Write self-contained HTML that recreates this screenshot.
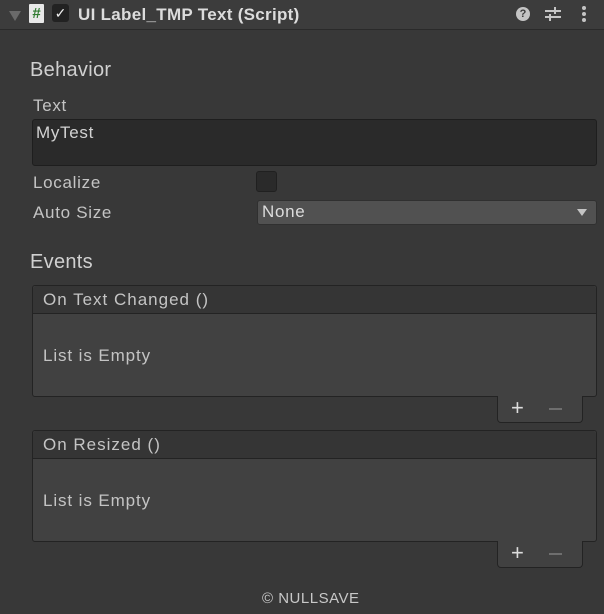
<!DOCTYPE html>
<html><head><style>
body{margin:0;width:604px;height:614px;background:#383838;font-family:"Liberation Sans",sans-serif;color:#c4c4c4;position:relative;overflow:hidden}
.a{position:absolute}
.hdr{left:0;top:0;width:604px;height:29px;background:#3c3c3c;border-bottom:1px solid #2a2a2a}
.t{font-size:17px;white-space:nowrap;letter-spacing:0.7px}
.box{border:1px solid #232323;border-radius:3px}
</style></head><body>
<div class="a hdr"></div>
<div class="a" style="left:9px;top:11px;width:0;height:0;border-left:6px solid transparent;border-right:6px solid transparent;border-top:10px solid #6a6a6a"></div>
<div class="a" style="left:29px;top:4px;width:15px;height:19px;background:#e8e8e8;border-radius:1px;color:#2f7a2f;font-size:15px;font-weight:bold;text-align:center;line-height:19px">#</div>
<div class="a" style="left:52px;top:4px;width:17px;height:18px;background:#222;border-radius:3px;color:#eee;font-size:14px;text-align:center;line-height:18px">✓</div>
<div class="a t" style="left:78px;top:5px;color:#dcdcdc;font-size:17px;font-weight:bold;letter-spacing:0.3px">UI Label_TMP Text (Script)</div>
<div class="a" style="left:516px;top:7px;width:14px;height:14px;border-radius:50%;background:#c4c4c4;color:#3c3c3c;font-size:11px;font-weight:bold;text-align:center;line-height:14px">?</div>
<svg class="a" style="left:544px;top:6px" width="18" height="16"><g stroke="#c4c4c4" stroke-width="2"><line x1="1" y1="5" x2="17" y2="5"/><line x1="1" y1="11" x2="17" y2="11"/><line x1="11" y1="1" x2="11" y2="8"/><line x1="6" y1="8" x2="6" y2="15"/></g></svg>
<div class="a" style="left:582px;top:6px;width:4px;height:4px;background:#c4c4c4;border-radius:2px;box-shadow:0 6px 0 #c4c4c4,0 12px 0 #c4c4c4"></div>

<div class="a t" style="left:30px;top:59px;font-size:20px;color:#d0d0d0;letter-spacing:0.3px">Behavior</div>
<div class="a t" style="left:33px;top:96px">Text</div>
<div class="a box" style="left:32px;top:119px;width:563px;height:45px;background:#2a2a2a;border-color:#1e1e1e"></div>
<div class="a t" style="left:36px;top:123px;color:#d2d2d2">MyTest</div>
<div class="a t" style="left:33px;top:173px">Localize</div>
<div class="a" style="left:256px;top:171px;width:19px;height:19px;background:#2a2a2a;border:1px solid #202020;border-radius:3px"></div>
<div class="a t" style="left:33px;top:203px">Auto Size</div>
<div class="a" style="left:257px;top:200px;width:338px;height:23px;background:#515151;border:1px solid #303030;border-radius:3px"></div>
<div class="a t" style="left:262px;top:202px;color:#dcdcdc">None</div>
<div class="a" style="left:577px;top:209px;border-left:5px solid transparent;border-right:5px solid transparent;border-top:7px solid #c4c4c4"></div>

<div class="a t" style="left:30px;top:251px;font-size:20px;color:#d0d0d0;letter-spacing:0.3px">Events</div>

<div class="a box" style="left:32px;top:285px;width:563px;height:110px;background:#414141"></div>
<div class="a" style="left:33px;top:286px;width:563px;height:27px;background:#353535;border-bottom:1px solid #232323;border-radius:3px 3px 0 0"></div>
<div class="a t" style="left:43px;top:290px;letter-spacing:1px">On Text Changed ()</div>
<div class="a t" style="left:43px;top:346px;letter-spacing:0.9px">List is Empty</div>
<div class="a" style="left:497px;top:396px;width:84px;height:26px;background:#414141;border:1px solid #232323;border-top:none;border-radius:0 0 4px 4px"></div>
<div class="a t" style="left:511px;top:395px;font-size:22px;color:#dcdcdc">+</div>
<div class="a" style="left:549px;top:408px;width:13px;height:2px;background:#6e6e6e"></div>

<div class="a box" style="left:32px;top:430px;width:563px;height:110px;background:#414141"></div>
<div class="a" style="left:33px;top:431px;width:563px;height:27px;background:#353535;border-bottom:1px solid #232323;border-radius:3px 3px 0 0"></div>
<div class="a t" style="left:43px;top:435px;letter-spacing:1px">On Resized ()</div>
<div class="a t" style="left:43px;top:491px;letter-spacing:0.9px">List is Empty</div>
<div class="a" style="left:497px;top:541px;width:84px;height:26px;background:#414141;border:1px solid #232323;border-top:none;border-radius:0 0 4px 4px"></div>
<div class="a t" style="left:511px;top:540px;font-size:22px;color:#dcdcdc">+</div>
<div class="a" style="left:549px;top:553px;width:13px;height:2px;background:#6e6e6e"></div>

<div class="a t" style="left:262px;top:590px;font-size:15px;color:#c8c8c8;letter-spacing:0.5px">© NULLSAVE</div>
</body></html>
